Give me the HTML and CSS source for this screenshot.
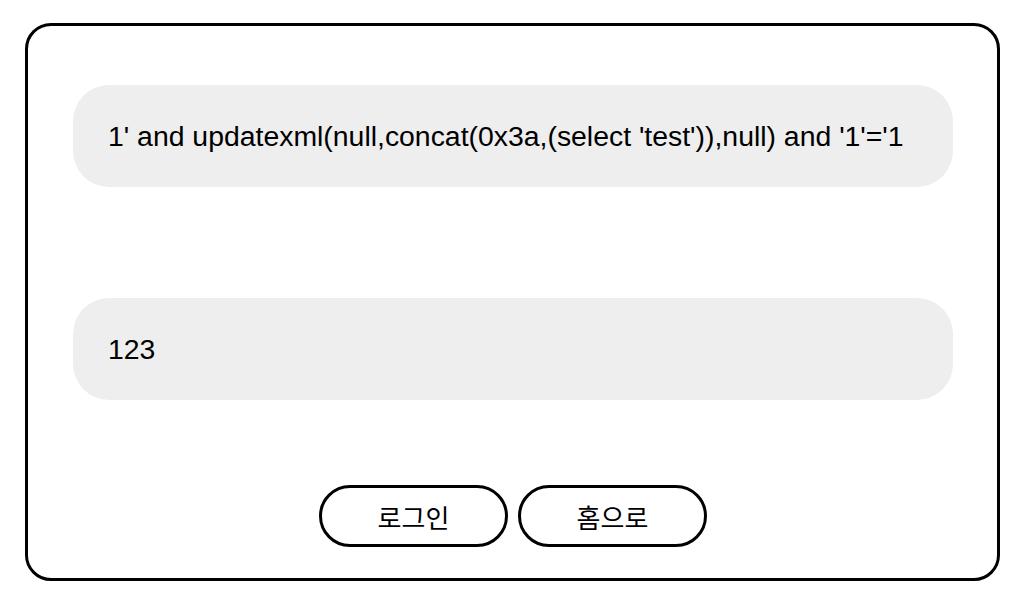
FILE: index.html
```html
<!DOCTYPE html>
<html lang="ko">
<head>
<meta charset="utf-8">
<title>로그인</title>
<link rel="stylesheet" href="styles.css">
</head>
<body>
<div class="page">
  <form class="frame">
    <input class="field field-id" type="text" value="1' and updatexml(null,concat(0x3a,(select 'test')),null) and '1'='1">
    <input class="field field-pw" type="text" value="123">
    <div class="actions">
      <button type="button" class="btn">로그인</button>
      <button type="button" class="btn">홈으로</button>
    </div>
  </form>
</div>
</body>
</html>
```
FILE: styles.css
```css
html, body {
  margin: 0;
  padding: 0;
  background: #ffffff;
}
.page {
  padding: 23px 24px 0 25px;
}
.frame {
  box-sizing: border-box;
  width: 975px;
  height: 558px;
  border: 3px solid #000;
  border-radius: 26px;
  padding: 59px 44px 0 45px;
  display: flex;
  flex-direction: column;
  margin: 0;
}
.field {
  box-sizing: border-box;
  width: 880px;
  height: 102px;
  border: none;
  outline: none;
  background: #eeeeee;
  border-radius: 36px;
  padding: 0 35px;
  font-family: "Liberation Sans", Arial, sans-serif;
  font-size: 28.4px;
  color: #000;
  margin: 0;
}
.field-pw {
  margin-top: 111px;
}
.actions {
  margin-top: 85px;
  display: flex;
  justify-content: center;
  gap: 10px;
}
.btn {
  box-sizing: border-box;
  width: 189px;
  height: 62px;
  border: 3px solid #000;
  border-radius: 31px;
  background: #fff;
  font-family: "Noto Sans CJK KR", "Liberation Sans", sans-serif;
  font-size: 26px;
  color: #000;
  padding: 0;
  margin: 0;
}
```
